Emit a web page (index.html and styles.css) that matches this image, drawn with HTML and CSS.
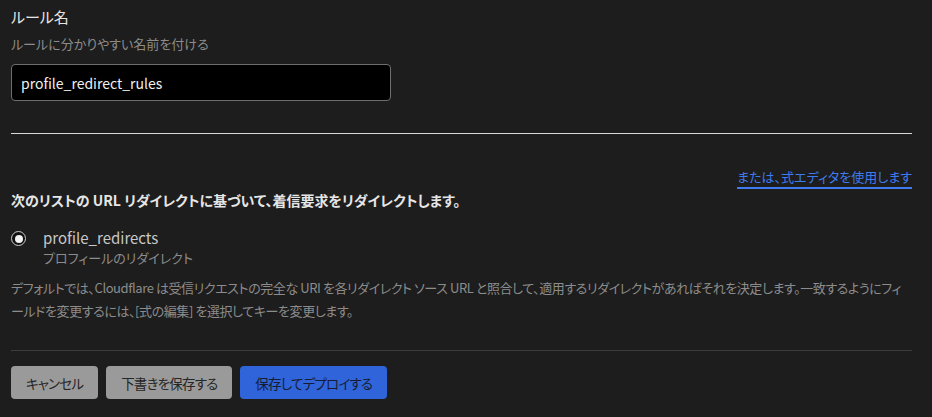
FILE: index.html
```html
<!DOCTYPE html>
<html lang="ja">
<head>
  <meta charset="UTF-8">
  <meta name="viewport" content="width=device-width, initial-scale=1.0">
  <title>ルール名</title>
  <link rel="stylesheet" href="styles.css">
</head>
<body>

  <!-- Rule name -->
  <section class="field">
    <label class="field-title" for="ruleName">ルール名</label>
    <p class="field-help">ルールに分かりやすい名前を付ける</p>
    <input class="text-input" type="text" id="ruleName" value="profile_redirect_rules">
  </section>

  <hr class="divider">

  <!-- Redirect list -->
  <section class="redirects">
    <div class="editor-link-row">
      <a class="editor-link" href="#">または、式エディタを使用します</a>
    </div>
    <h2 class="redirects-title">次のリストの URL リダイレクトに基づいて、着信要求をリダイレクトします。</h2>

    <label class="radio-row">
      <span class="radio"><span class="radio-dot"></span></span>
      <span class="radio-text">
        <span class="radio-name">profile_redirects</span>
        <span class="radio-desc">プロフィールのリダイレクト</span>
      </span>
    </label>

    <p class="note">デフォルトでは、Cloudflare は受信リクエストの完全な URI を各リダイレクト ソース URL と照合して、適用するリダイレクトがあればそれを決定します。一致するようにフィールドを変更するには、[式の編集] を選択してキーを変更します。</p>
  </section>

  <hr class="divider divider-dim">

  <!-- Actions -->
  <div class="actions">
    <button type="button" class="btn btn-grey">キャンセル</button>
    <button type="button" class="btn btn-grey">下書きを保存する</button>
    <button type="button" class="btn btn-blue">保存してデプロイする</button>
  </div>

</body>
</html>
```

FILE: styles.css
```css
/* General Reset */
* {
  margin: 0;
  padding: 0;
  box-sizing: border-box;
}

body {
  font-family: "Noto Sans CJK JP", "Noto Sans", sans-serif;
  font-feature-settings: "palt";
  background-color: #1d1d1d;
  color: #e2e2e2;
  padding: 6px 20px 0 11px;
  width: 932px;
  height: 417px;
  overflow: hidden;
}

.field-title {
  display: block;
  font-size: 15px;
  line-height: 22px;
  color: #e6e6e6;
}

.field-help {
  font-size: 13px;
  line-height: 20px;
  color: #8c8c8c;
  margin-top: 6px;
}

.text-input {
  display: block;
  width: 380px;
  height: 37px;
  margin-top: 10px;
  padding: 0 9px;
  background: #000;
  border: 1px solid #6e6e6e;
  border-radius: 4px;
  color: #f0f0f0;
  font-family: inherit;
  font-feature-settings: inherit;
  font-size: 14px;
}

.divider {
  border: none;
  border-top: 1px solid #d9d9d9;
  margin-top: 32px;
}

.divider-dim {
  border-top-color: #3c3c3c;
  margin-top: 28px;
}

.redirects {
  padding-top: 33px;
}

.editor-link-row {
  display: flex;
  justify-content: flex-end;
}

.editor-link {
  font-size: 13px;
  line-height: 20px;
  color: #3e7bf0;
  text-decoration: none;
  border-bottom: 2px solid #3e7bf0;
}

.redirects-title {
  font-size: 14px;
  font-weight: bold;
  line-height: 20px;
  color: #e6e6e6;
  margin-top: 1px;
}

.radio-row {
  display: flex;
  gap: 17px;
  margin-top: 18px;
}

.radio {
  flex: none;
  display: flex;
  align-items: center;
  justify-content: center;
  width: 15px;
  height: 15px;
  margin-top: 3px;
  border: 1.5px solid #cfcfcf;
  border-radius: 50%;
  background: #111;
}

.radio-dot {
  width: 8px;
  height: 8px;
  border-radius: 50%;
  background: #f2f2f2;
}

.radio-text {
  display: flex;
  flex-direction: column;
}

.radio-name {
  font-size: 15px;
  line-height: 20px;
  color: #c8c8c8;
}

.radio-desc {
  font-size: 13px;
  line-height: 20px;
  color: #8c8c8c;
}

.note {
  font-size: 13px;
  line-height: 23px;
  letter-spacing: -0.42px;
  color: #8c8c8c;
  margin-top: 8px;
}

.actions {
  display: flex;
  gap: 8px;
  margin-top: 15px;
}

.btn {
  height: 33px;
  padding: 0 15px;
  border: none;
  border-radius: 4px;
  font-family: inherit;
  font-feature-settings: inherit;
  font-size: 13.5px;
  letter-spacing: -0.8px;
  color: #262626;
  cursor: pointer;
}

.btn-grey {
  background: #9a9a9a;
}

.btn-blue {
  background: #2f64da;
  color: #161d33;
}
```
